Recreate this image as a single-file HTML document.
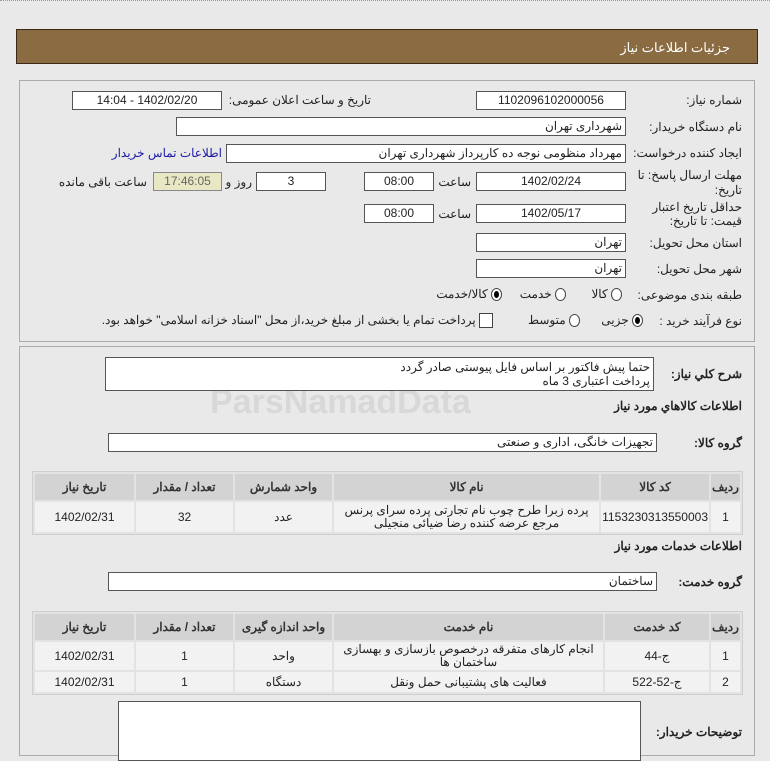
<!DOCTYPE html>
<html><head><meta charset="utf-8"><style>
body{margin:0;width:770px;height:745px;background:#e9e9e9;font-family:Tahoma,"Liberation Sans","Noto Sans CJK SC",sans-serif;font-size:12px;color:#222;position:relative;overflow:hidden;direction:rtl}
.a{position:absolute;white-space:nowrap}
.in{position:absolute;background:#fff;border:1px solid #555;box-sizing:border-box;height:19px;line-height:17px;font-size:12px;padding:0 3px}
.c{text-align:center}
.lbl{position:absolute;white-space:nowrap;font-size:12px}
.b{font-weight:bold}
.rad{display:inline-block;width:11px;height:13px;border:1px solid #444;border-radius:50%;background:#fff;vertical-align:middle;box-sizing:border-box;position:relative}
.rad.on::after{content:"";position:absolute;left:2px;top:2px;width:5px;height:7px;border-radius:50%;background:#000}
table{position:absolute;border-collapse:separate;border-spacing:2px;background:#e3e3e3;border:1px solid #cfcfcf;font-size:12px}
th{background:#d3d3d3;font-weight:bold;height:24px;color:#333}
td{background:#f2f2f2;text-align:center;color:#222}
</style></head><body>
<div style="position:absolute;left:0;top:0;width:770px;border-top:1px dotted #999"></div>
<div class="a" style="left:16px;top:29px;width:742px;height:35px;background:#8b6b42;border:1px solid #3a2a15;box-sizing:border-box"></div>
<div class="a" style="right:40px;top:40px;color:#fff;font-size:13px">جزئیات اطلاعات نیاز</div>
<div class="a" style="left:19px;top:80px;width:736px;height:262px;border:1px solid #aaa;box-sizing:border-box"></div>
<div class="a" style="left:19px;top:346px;width:736px;height:410px;border:1px solid #aaa;box-sizing:border-box"></div>
<div class="a" style="left:210px;top:383px;font-size:34px;font-weight:bold;color:#d8d8d8;direction:ltr;font-family:'Liberation Sans',sans-serif">ParsNamadData</div>

<div class="lbl" style="right:28px;top:93px">شماره نیاز:</div>
<div class="in c" style="left:476px;top:91px;width:150px">1102096102000056</div>
<div class="lbl" style="right:399px;top:93px">تاریخ و ساعت اعلان عمومی:</div>
<div class="in c" style="left:72px;top:91px;width:150px">1402/02/20 - 14:04</div>

<div class="lbl" style="right:28px;top:120px">نام دستگاه خریدار:</div>
<div class="in" style="left:176px;top:117px;width:450px">شهرداری تهران</div>

<div class="lbl" style="right:28px;top:146px">ایجاد کننده درخواست:</div>
<div class="in" style="left:226px;top:144px;width:400px">مهرداد منظومی نوجه ده کارپرداز شهرداری تهران</div>
<div class="lbl" style="right:548px;top:146px;color:#1a1aa6">اطلاعات تماس خریدار</div>

<div class="lbl" style="right:28px;top:168px">مهلت ارسال پاسخ: تا</div>
<div class="lbl" style="right:28px;top:183px">تاریخ:</div>
<div class="in c" style="left:476px;top:172px;width:150px">1402/02/24</div>
<div class="lbl" style="right:299px;top:175px">ساعت</div>
<div class="in c" style="left:364px;top:172px;width:70px">08:00</div>
<div class="in c" style="left:256px;top:172px;width:70px">3</div>
<div class="lbl" style="right:518px;top:175px">روز و</div>
<div class="in c" style="left:153px;top:172px;width:69px;background:#e9e8c4;border-color:#888;color:#666">17:46:05</div>
<div class="lbl" style="right:623px;top:175px">ساعت باقی مانده</div>

<div class="lbl" style="right:28px;top:200px">حداقل تاریخ اعتبار</div>
<div class="lbl" style="right:28px;top:214px">قیمت: تا تاریخ:</div>
<div class="in c" style="left:476px;top:204px;width:150px">1402/05/17</div>
<div class="lbl" style="right:299px;top:207px">ساعت</div>
<div class="in c" style="left:364px;top:204px;width:70px">08:00</div>

<div class="lbl" style="right:28px;top:236px">استان محل تحویل:</div>
<div class="in" style="left:476px;top:233px;width:150px">تهران</div>
<div class="lbl" style="right:28px;top:262px">شهر محل تحویل:</div>
<div class="in" style="left:476px;top:259px;width:150px">تهران</div>

<div class="lbl" style="right:28px;top:288px">طبقه بندی موضوعی:</div>
<div class="lbl" style="right:148px;top:287px"><span class="rad"></span> کالا</div>
<div class="lbl" style="right:204px;top:287px"><span class="rad"></span> خدمت</div>
<div class="lbl" style="right:268px;top:287px"><span class="rad on"></span> کالا/خدمت</div>

<div class="lbl" style="right:28px;top:314px">نوع فرآیند خرید :</div>
<div class="lbl" style="right:127px;top:313px"><span class="rad on"></span> جزیی</div>
<div class="lbl" style="right:190px;top:313px"><span class="rad"></span> متوسط</div>
<div class="lbl" style="right:277px;top:313px"><span style="display:inline-block;width:12px;height:13px;border:1px solid #444;background:#fff;vertical-align:middle"></span> پرداخت تمام یا بخشی از مبلغ خرید،از محل "اسناد خزانه اسلامی" خواهد بود.</div>

<div class="lbl b" style="right:28px;top:367px">شرح کلي نیاز:</div>
<div class="in" style="left:105px;top:357px;width:549px;height:34px;line-height:14px;padding-top:2px">حتما پیش فاکتور بر اساس فایل پیوستی صادر گردد<br>پرداخت اعتباری 3 ماه</div>
<div class="lbl b" style="right:28px;top:399px">اطلاعات کالاهاي مورد نیاز</div>

<div class="lbl b" style="right:28px;top:436px">گروه کالا:</div>
<div class="in" style="left:108px;top:433px;width:549px">تجهیزات خانگی، اداری و صنعتی</div>

<table style="left:32px;top:471px;width:711px">
<tr><th style="width:27px">ردیف</th><th style="width:102px">کد کالا</th><th>نام کالا</th><th style="width:95px">واحد شمارش</th><th style="width:95px">تعداد / مقدار</th><th style="width:97px">تاریخ نیاز</th></tr>
<tr style="height:30px"><td>1</td><td>1153230313550003</td><td style="line-height:13px">پرده زبرا طرح چوب نام تجارتی پرده سرای پرنس مرجع عرضه کننده رضا ضیائی منجیلی</td><td>عدد</td><td>32</td><td>1402/02/31</td></tr>
</table>

<div class="lbl b" style="right:28px;top:539px">اطلاعات خدمات مورد نیاز</div>
<div class="lbl b" style="right:28px;top:575px">گروه خدمت:</div>
<div class="in" style="left:108px;top:572px;width:549px">ساختمان</div>

<table style="left:32px;top:611px;width:711px">
<tr><th style="width:27px">ردیف</th><th style="width:102px">کد خدمت</th><th>نام خدمت</th><th style="width:95px">واحد اندازه گیری</th><th style="width:95px">تعداد / مقدار</th><th style="width:97px">تاریخ نیاز</th></tr>
<tr style="height:28px"><td>1</td><td>ج-44</td><td style="line-height:13px">انجام کارهای متفرقه درخصوص بازسازی و بهسازی ساختمان ها</td><td>واحد</td><td>1</td><td>1402/02/31</td></tr>
<tr style="height:20px"><td>2</td><td>ج-52-522</td><td>فعالیت های پشتیبانی حمل ونقل</td><td>دستگاه</td><td>1</td><td>1402/02/31</td></tr>
</table>

<div class="lbl b" style="right:28px;top:725px">توضیحات خریدار:</div>
<div class="in" style="left:118px;top:701px;width:523px;height:60px"></div>
</body></html>
